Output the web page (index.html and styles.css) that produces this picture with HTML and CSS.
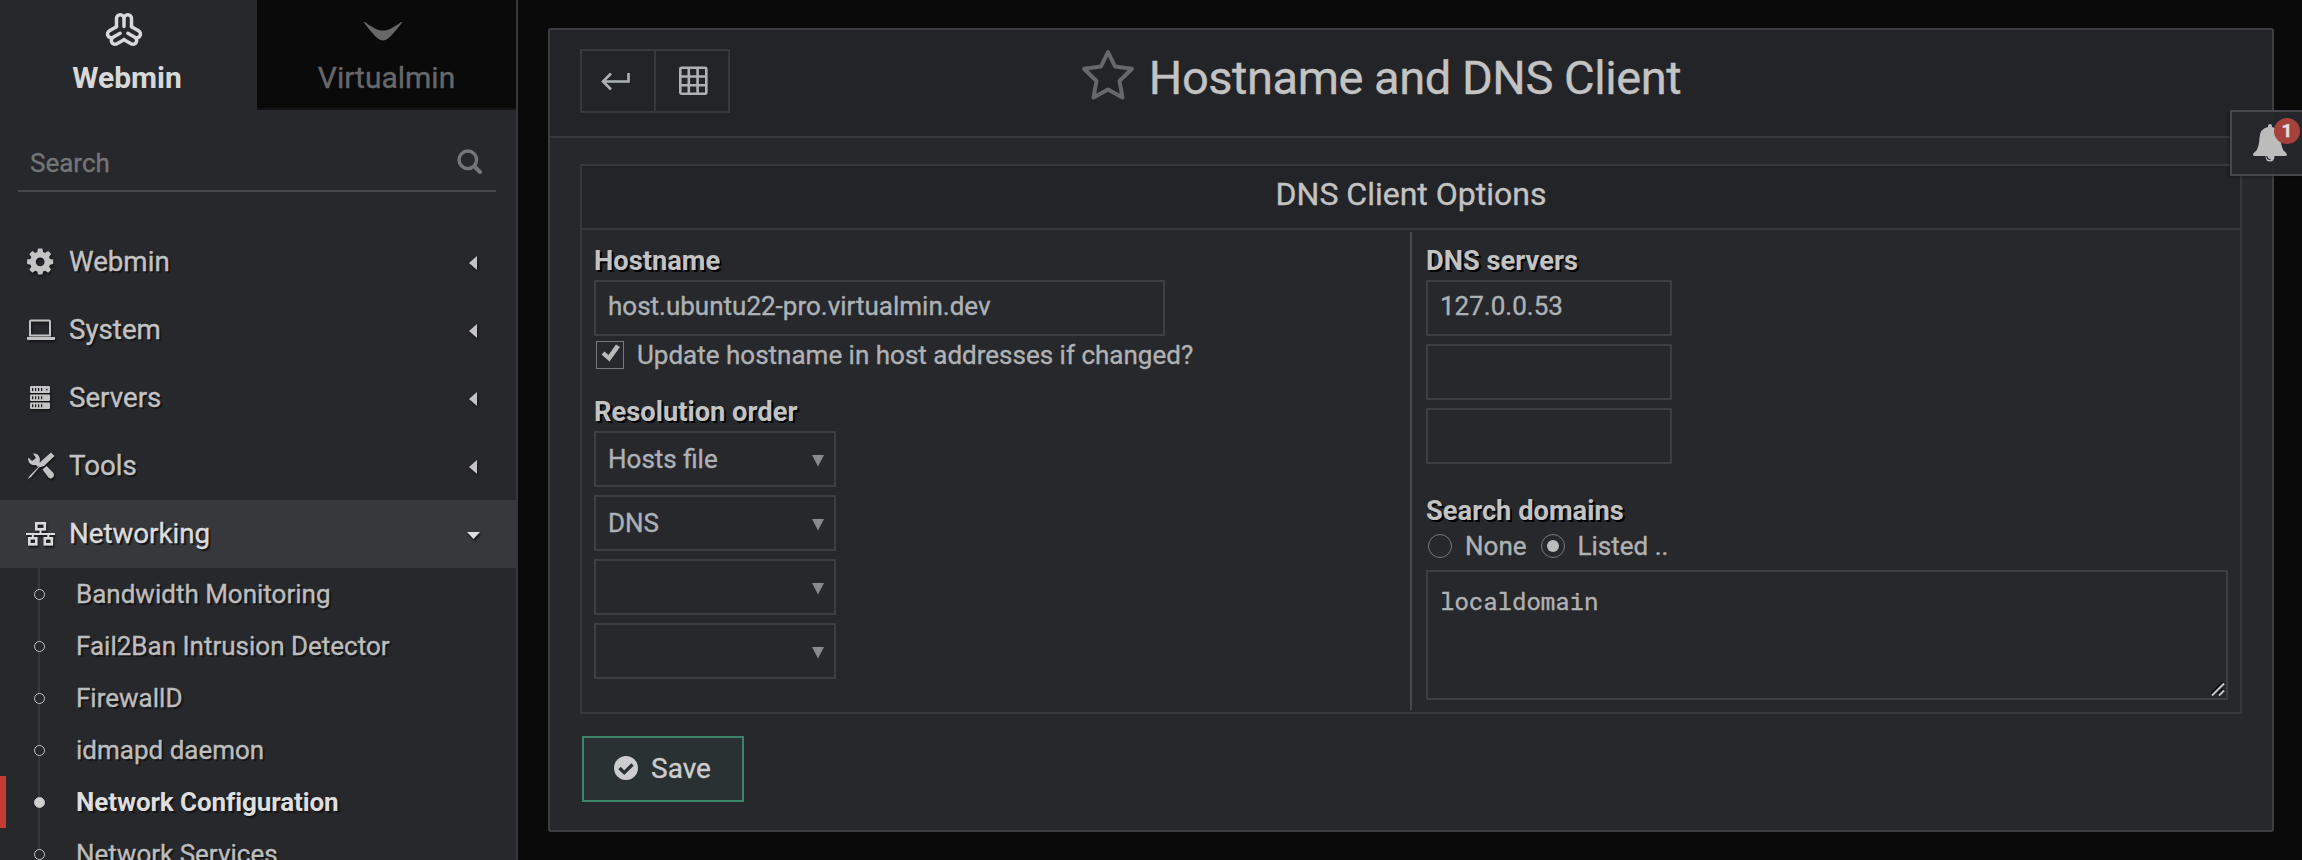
FILE: index.html
```html
<!DOCTYPE html>
<html lang="en">
<head>
<meta charset="utf-8">
<title>Hostname and DNS Client</title>
<link rel="stylesheet" href="styles.css">
</head>
<body>
<div class="app">
  <aside class="sidebar">
    <div class="tabs">
      <div class="tab active">
        <svg class="tab-icon" width="36" height="34" viewBox="0 0 36 34" fill="none" stroke="currentColor" stroke-width="3.500" stroke-linecap="round" stroke-linejoin="round"><defs><path id="arm" d="M-7.500 -4.300V-12.500a3.750 3.750 0 0 1 7.500 0a3.750 3.750 0 0 1 7.500 0V-4.300M0 -12.500V-4.500"/></defs><g transform="translate(18 19)"><use href="#arm"/><use href="#arm" transform="rotate(120)"/><use href="#arm" transform="rotate(240)"/></g></svg>
        <span>Webmin</span>
      </div>
      <div class="tab other">
        <svg class="tab-icon" width="38" height="34" viewBox="0 0 38 34" fill="currentColor"><path d="M0 10.500C0 9.800.8 9.900 1.500 10.400C8 15 13 18.500 19 18.500S30 15 36.500 10.400c.7-.5 1.500-.6 1.500.1C34 16 27 24.500 24 26.500c-3 2.600-7 2.600-10 0C11 24.500 4 16 0 10.500z"/></svg>
        <span>Virtualmin</span>
      </div>
    </div>
    <div class="search">
      <span>Search</span>
      <svg width="26" height="26" viewBox="0 0 26 26" fill="none" stroke="currentColor"><circle cx="10.800" cy="10.800" r="8.800" stroke-width="3.400"/><path d="M17.500 17.500l5.500 5.500" stroke-width="4" stroke-linecap="round"/></svg>
    </div>
    <nav class="menu">
      <div class="item"><svg class="ico" width="30" height="30" viewBox="0 0 30 30"><path fill="currentColor" fill-rule="evenodd" d="M12 1.500h4.400l.7 3.600 2 .8 3-2 3 3-2 3 .8 2 3.300.7V17l-3.300.7-.8 2 2 3-3 3-3-2-2 .8-.7 3.100h-4.400l-.7-3.100-2-.8-3 2-3-3 2-3-.8-2-3.400-.7v-4.400l3.400-.7.8-2-2-3 3-3 3 2 2-.8zM14.200 10.400a4.400 4.400 0 1 0 0 8.800 4.400 4.400 0 0 0 0-8.800z"/></svg><span>Webmin</span><svg class="caret" width="14" height="16" viewBox="0 0 14 16"><path fill="currentColor" d="M10 2v14L2 9z"/></svg></div>
      <div class="item"><svg class="ico" width="30" height="30" viewBox="0 0 30 30"><path fill="none" stroke="currentColor" stroke-width="2" d="M5 5.500h18q1 0 1 1v14H4v-14q0-1 1-1z"/><path fill="currentColor" d="M1 22h28v2q0 1-1 1H2q-1 0-1-1z"/></svg><span>System</span><svg class="caret" width="14" height="16" viewBox="0 0 14 16"><path fill="currentColor" d="M10 2v14L2 9z"/></svg></div>
      <div class="item"><svg class="ico" width="30" height="30" viewBox="0 0 30 30"><path fill="currentColor" fill-rule="evenodd" d="M5 3h18q1 0 1 1v5q0 1-1 1H5q-1 0-1-1V4q0-1 1-1zm1 2v3h1.200V5zm3 0v3h1.200V5zm3 0v3h1.200V5zm3 0v3h1.200V5zm5 1v1.200h1.500V6zM5 11.500h18q1 0 1 1V17q0 1-1 1H5q-1 0-1-1v-4.500q0-1 1-1zm1 1.700v3h1.200v-3zm3 0v3h1.200v-3zm3 0v3h1.200v-3zm3 0v3h1.200v-3zM5 19.500h18q1 0 1 1V25q0 1-1 1H5q-1 0-1-1v-4.500q0-1 1-1zm1 1.700v3h1.200v-3zm3 0v3h1.200v-3zm3 0v3h1.200v-3zm3 0v3h1.200v-3z"/></svg><span>Servers</span><svg class="caret" width="14" height="16" viewBox="0 0 14 16"><path fill="currentColor" d="M10 2v14L2 9z"/></svg></div>
      <div class="item"><svg class="ico" width="30" height="30" viewBox="0 0 30 30"><path fill="currentColor" d="M7 2.500q5-.5 6.500 4 .8 2.500 0 4.500l1.500 1.500-3 3.500-2-2q-3.500 1-6-1.500-2.500-2.500-1.500-6l3.500 3.500 4-3zM25 1.500l3.500 3.500-10.500 10-5 1.500L5 26l-3 2 1.500-3L13 15.200l1.500-4.500zM16.500 18.500l4-3.500 6.500 6.500q2 2.500 0 4.700t-4.500.3z"/></svg><span>Tools</span><svg class="caret" width="14" height="16" viewBox="0 0 14 16"><path fill="currentColor" d="M10 2v14L2 9z"/></svg></div>
      <div class="item open"><svg class="ico" width="30" height="30" viewBox="0 0 30 30"><g fill="none" stroke="currentColor" stroke-width="2.600"><rect x="10.300" y="4.300" width="8.500" height="6"/><rect x="3.300" y="19.300" width="7" height="6"/><rect x="18.800" y="19.300" width="7" height="6"/></g><path fill="none" stroke="currentColor" stroke-width="2" d="M0 15h29M14.500 11v4M6.800 15v4M22.300 15v4"/></svg><span>Networking</span><svg class="caret" width="14" height="16" viewBox="0 0 14 16"><path fill="currentColor" d="M0 6h13L6.500 13z"/></svg></div>
    </nav>
    <ul class="submenu">
      <li><i></i>Bandwidth Monitoring</li>
      <li><i></i>Fail2Ban Intrusion Detector</li>
      <li><i></i>FirewallD</li>
      <li><i></i>idmapd daemon</li>
      <li class="current"><i></i>Network Configuration</li>
      <li><i></i>Network Services</li>
    </ul>
  </aside>
  <main class="content">
    <section class="panel">
      <header class="panel-head">
        <div class="btns">
          <button><svg class="back" width="30" height="22" viewBox="0 0 30 22" fill="none" stroke="currentColor" stroke-width="2.600"><path d="M27.500 3v8.500H3M10 3.500l-8 8 8 8"/></svg></button>
          <button><svg class="grid" width="30" height="30" viewBox="0 0 30 30" fill="none" stroke="currentColor" stroke-width="2.600"><rect x="2.300" y="1.800" width="26" height="26" rx="1.500"/><path d="M10.800 1.500v26M19.600 1.500v26M2 10.500h26M2 19.300h26"/></svg></button>
        </div>
        <h1><svg width="54" height="52" viewBox="0 0 54 52" fill="none" stroke="#67686b" stroke-width="4" stroke-linejoin="round"><path d="M27 3l7 14.500 17 2.300L38.500 32l3 16.500L27 40.500l-14.500 8 3-16.500L3 19.800 20 17.500z"/></svg><span>Hostname and DNS Client</span></h1>
      </header>
      <div class="table">
        <h2>DNS Client Options</h2>
        <div class="cols">
          <div class="col left">
            <b class="label">Hostname</b>
            <div class="field host">host.ubuntu22-pro.virtualmin.dev</div>
            <div class="choice check"><span class="box"><svg width="24" height="24" viewBox="0 0 24 24"><path fill="#b9b9b9" d="M3.500 11.500l3-3 4 3.500L18 1.500 22 4 11.500 18.500z"/></svg></span><span>Update hostname in host addresses if changed?</span></div>
            <b class="label order">Resolution order</b>
            <div class="stack">
              <div class="field select"><span>Hosts file</span><svg width="12" height="12" viewBox="0 0 12 12"><path fill="#88898b" d="M0 0h12L6 11.500z"/></svg></div>
              <div class="field select"><span>DNS</span><svg width="12" height="12" viewBox="0 0 12 12"><path fill="#88898b" d="M0 0h12L6 11.500z"/></svg></div>
              <div class="field select"><span></span><svg width="12" height="12" viewBox="0 0 12 12"><path fill="#88898b" d="M0 0h12L6 11.500z"/></svg></div>
              <div class="field select"><span></span><svg width="12" height="12" viewBox="0 0 12 12"><path fill="#88898b" d="M0 0h12L6 11.500z"/></svg></div>
            </div>
          </div>
          <div class="col right">
            <b class="label">DNS servers</b>
            <div class="stack">
              <div class="field server">127.0.0.53</div>
              <div class="field server"></div>
              <div class="field server"></div>
            </div>
            <b class="label domains">Search domains</b>
            <div class="choice radios"><span class="radio"></span><span class="none">None</span><span class="radio on"></span><span>Listed ..</span></div>
            <div class="area">localdomain<svg class="grip" width="14" height="14" viewBox="0 0 14 14" stroke-width="2"><path stroke="#0c0c0d" d="M0 12L12 0M7 12l5-5"/><path stroke="#c4c4c4" d="M1 13.500L13 1.500M8 13.500l5-5"/></svg></div>
          </div>
        </div>
      </div>
      <button class="save"><svg width="24" height="24" viewBox="0 0 24 24"><circle cx="12" cy="12" r="12" fill="#cdcdcd"/><path d="M5.500 12l4.700 4.700L18.500 8.500" fill="none" stroke="#293133" stroke-width="3.400"/></svg><span>Save</span></button>
    </section>
  </main>
  <div class="notify">
    <svg width="36" height="38" viewBox="0 0 36 38"><path fill="#bcbcbc" d="M18 0q2 0 2 3 8 1.500 8.500 11 .5 8 3 12.500 4 3 3.500 4.500-.3 1-2 1H22.500q0 5.500-4.500 5.500T13.500 32H3q-1.700 0-2-1-.5-1.500 3.500-4.500 2.500-4.500 3-12.500Q8 4.500 16 3q0-3 2-3z"/><path d="M14.800 32q.2 3.500 3.700 3.500" stroke="#26272b" stroke-width="1.200" fill="none"/></svg>
    <span class="badge">1</span>
  </div>
</div>
</body>
</html>
```
FILE: styles.css
```css
* { box-sizing: border-box; }
body { margin: 0; background: #0a0a0a; font-family: Roboto, "Liberation Sans", sans-serif; color: #c3c3c3; overflow: hidden; -webkit-text-stroke: 0.35px currentColor; }
.app { display: flex; width: 2302px; height: 860px; overflow: hidden; position: relative; }
.sidebar { width: 518px; flex: none; height: 860px; overflow: hidden; background: #27282c; border-right: 2px solid #37383c; }
.tabs { display: flex; height: 110px; }
.tab { display: flex; flex-direction: column; align-items: center; padding-top: 12px; font-size: 30px; }
.tab span { line-height: 36px; margin-top: 14px; }
.active { width: 257px; color: #d8d8d8; font-weight: 700; padding-right: 8px; }
.active .tab-icon { margin-right: 2px; overflow: visible; }
.active span { margin-left: 5px; -webkit-text-stroke: 0; }
.other { flex: 1; background: #0a0a0a; border-bottom: 2px solid #141415; color: #67686a; }
.other .tab-icon { margin-right: 8px; }
.search { margin: 0 20px 0 18px; height: 82px; border-bottom: 2px solid #47484b; display: flex; justify-content: space-between; align-items: flex-start; padding: 37px 13px 0 12px; color: #747577; font-size: 26px; line-height: 32px; }
.search svg { margin-top: 2px; }
.menu { margin-top: 36px; }
.item { height: 68px; display: flex; align-items: center; padding: 0 35px 0 26px; font-size: 27.7px; color: #c3c3c3; text-shadow: 2px 2px 1px #151517; }
.item span { flex: 1; margin-left: 13px; line-height: 34px; }
.item svg { filter: drop-shadow(1px 2px 1px #151517); }
.open { background: #37383c; color: #dcdcdc; }
.submenu { list-style: none; margin: 0; padding: 0; background: linear-gradient(#37383c, #37383c) 38px 0 / 2px 100% no-repeat; }
.submenu li { height: 52px; display: flex; align-items: center; padding-left: 34px; font-size: 26px; line-height: 52px; color: #bdbdbd; text-shadow: 2px 2px 1px #151517; }
.submenu i { width: 11px; height: 11px; border: 1.500px solid #c3c3c3; border-radius: 50%; background: #27282c; margin-right: 31px; }
.submenu .current { border-left: 6px solid #c23c35; padding-left: 28px; font-weight: 700; color: #dedede; -webkit-text-stroke: 0; letter-spacing: -0.1px; }
.submenu .current i { background: #d0d0d0; }
.content { flex: 1; padding: 28px 28px 28px 30px; }
.panel { height: 804px; border: 2px solid #3d3e42; border-radius: 3px; background: #27282c; }
.panel-head { height: 108px; border-bottom: 2px solid #37383c; background: #232428; position: relative; padding: 19px 0; }
.btns { position: absolute; left: 30px; display: flex; width: 150px; height: 64px; border: 2px solid #37383c; }
.btns button { flex: 1; background: none; border: 0; padding: 0; color: #adb2b6; display: flex; align-items: center; justify-content: center; }
.btns button + button { border-left: 2px solid #37383c; }
.btns .back { margin-right: 4px; }
.btns .grid { margin-left: 1px; }
h1 { margin: 0; display: flex; justify-content: center; align-items: flex-start; gap: 14px; font-size: 47px; letter-spacing: -0.45px; font-weight: 400; line-height: 56px; padding-right: 60px; }
h1 span { margin-top: 1px; }
.table { margin: 26px 30px 0; height: 550px; border: 2px solid #37383c; }
h2 { margin: 0; height: 64px; background: #232428; border-bottom: 2px solid #37383c; text-align: center; font-size: 32px; font-weight: 400; line-height: 56px; }
.cols { display: flex; padding-top: 2px; height: 480px; }
.left { width: 828px; padding-left: 12px; }
.right { flex: 1; border-left: 2px solid #47484b; padding: 0 12px 0 14px; }
.label { display: block; height: 48px; line-height: 59px; font-size: 27.3px; text-shadow: 2px 2px 0 #000; white-space: nowrap; -webkit-text-stroke: 0; }
.field { height: 56px; border: 2px solid #3d3e42; padding: 0 12px; font-size: 26px; line-height: 48px; color: #adb2b6; }
.host { width: 571px; }
.choice { display: flex; align-items: center; font-size: 26px; color: #b0b1b3; line-height: 36px; }
.check { margin: 1px 0 0 2px; height: 36px; gap: 13px; }
.box { width: 28px; height: 28px; border: 1px solid #77787a; padding: 1px; }
.box svg { display: block; }
.order { margin-top: 10px; }
.stack { display: flex; flex-direction: column; gap: 8px; }
.select { width: 242px; display: flex; justify-content: space-between; padding-right: 10px; line-height: 52px; }
.select svg { margin-top: 22px; }
.server { width: 246px; }
.domains { margin-top: 18px; }
.radios { height: 36px; margin-left: 2px; margin-top: -2px; }
.radio { width: 24px; height: 24px; border: 1px solid #77787a; border-radius: 50%; margin-right: 13px; display: flex; align-items: center; justify-content: center; }
.on::after { content: ""; width: 12px; height: 12px; border-radius: 50%; background: #bcbcbc; }
.none { margin-right: 14px; }
.area { width: 802px; height: 130px; border: 2px solid #3d3e42; margin-top: 6px; padding: 11px 12px; position: relative; font-family: "Roboto Mono", "DejaVu Sans Mono", monospace; font-size: 24px; line-height: 36px; color: #b0b1b3; }
.grip { position: absolute; right: 1px; bottom: 2px; }
.save { margin: 22px 0 0 32px; width: 162px; height: 66px; border: 2px solid #3a8468; background: #293133; color: #cdcdcd; font-family: inherit; font-size: 28px; display: flex; align-items: center; padding: 0 0 2px 30px; gap: 13px; }
.notify { position: absolute; left: 2230px; top: 110px; width: 74px; height: 66px; border: 2px solid #47484c; background: #27282cf5; box-shadow: -2px 2px 2px #0003; padding: 12px 0 0 20px; }
.badge { position: absolute; left: 42px; top: 6px; width: 26px; height: 26px; border-radius: 50%; background: #a5423c; color: #e0e0e0; font-size: 19px; font-weight: 700; line-height: 26px; text-align: center; }
```
